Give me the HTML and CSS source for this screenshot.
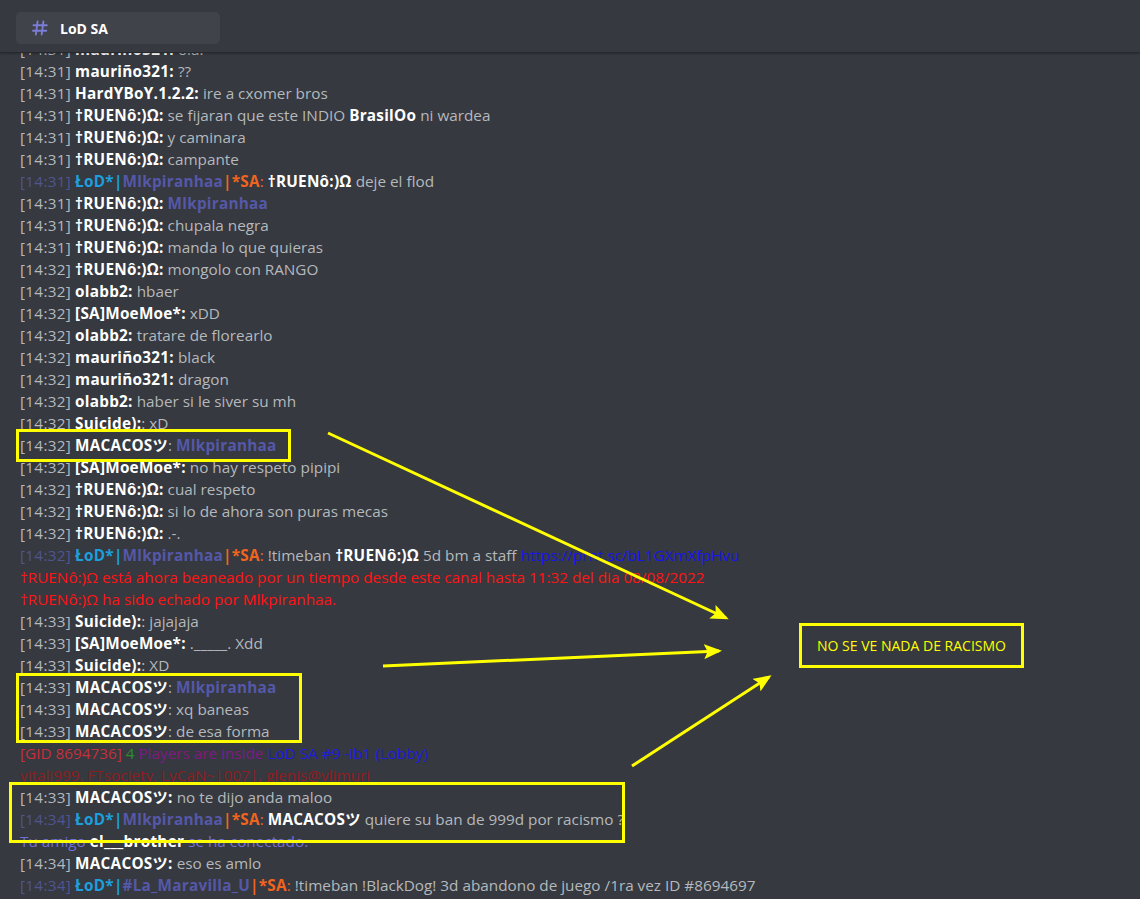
FILE: index.html
```html
<!DOCTYPE html>
<html lang="es">
<head>
<meta charset="utf-8">
<title>LoD SA</title>
<link rel="stylesheet" href="styles.css">
</head>
<body>
<div class="app">
  <header class="topbar">
    <div class="tab">
      <svg class="hash" width="16" height="16" viewBox="0 0 16 16" aria-hidden="true">
        <path d="M5.6 1.5 L3.9 14.5 M11.4 1.5 L9.7 14.5 M1.5 5.3 H14.8 M1 10.7 H14.3" stroke="#7b7dd6" stroke-width="1.9" fill="none" stroke-linecap="round"/>
      </svg>
      <span class="title">LoD SA</span>
    </div>
  </header>

  <main class="chat">
    <div class="log">
      <div class="row"><span class="ts">[14:31]</span> <b class="nick">mauriño321:</b> <span class="msg">ola.</span></div>
      <div class="row"><span class="ts">[14:31]</span> <b class="nick">mauriño321:</b> <span class="msg">??</span></div>
      <div class="row"><span class="ts">[14:31]</span> <b class="nick">HardYBoY.1.2.2:</b> <span class="msg">ire a cxomer bros</span></div>
      <div class="row"><span class="ts">[14:31]</span> <b class="nick">†RUENô:)Ω:</b> <span class="msg">se fijaran que este INDIO <b class="nick">BrasilOo</b> ni wardea</span></div>
      <div class="row"><span class="ts">[14:31]</span> <b class="nick">†RUENô:)Ω:</b> <span class="msg">y caminara</span></div>
      <div class="row"><span class="ts">[14:31]</span> <b class="nick">†RUENô:)Ω:</b> <span class="msg">campante</span></div>
      <div class="row"><span class="ts staff">[14:31]</span> <b class="clan">ŁoD*|</b><b class="mod">Mlkpiranhaa</b><b class="sa">|*SA</b><span class="sa-c">:</span> <b class="nick">†RUENô:)Ω</b> <span class="msg">deje el flod</span></div>
      <div class="row"><span class="ts">[14:31]</span> <b class="nick">†RUENô:)Ω:</b> <b class="mod">Mlkpiranhaa</b></div>
      <div class="row"><span class="ts">[14:31]</span> <b class="nick">†RUENô:)Ω:</b> <span class="msg">chupala negra</span></div>
      <div class="row"><span class="ts">[14:31]</span> <b class="nick">†RUENô:)Ω:</b> <span class="msg">manda lo que quieras</span></div>
      <div class="row"><span class="ts">[14:32]</span> <b class="nick">†RUENô:)Ω:</b> <span class="msg">mongolo con RANGO</span></div>
      <div class="row"><span class="ts">[14:32]</span> <b class="nick">olabb2:</b> <span class="msg">hbaer</span></div>
      <div class="row"><span class="ts">[14:32]</span> <b class="nick">[SA]MoeMoe*:</b> <span class="msg">xDD</span></div>
      <div class="row"><span class="ts">[14:32]</span> <b class="nick">olabb2:</b> <span class="msg">tratare de florearlo</span></div>
      <div class="row"><span class="ts">[14:32]</span> <b class="nick">mauriño321:</b> <span class="msg">black</span></div>
      <div class="row"><span class="ts">[14:32]</span> <b class="nick">mauriño321:</b> <span class="msg">dragon</span></div>
      <div class="row"><span class="ts">[14:32]</span> <b class="nick">olabb2:</b> <span class="msg">haber si le siver su mh</span></div>
      <div class="row"><span class="ts">[14:32]</span> <b class="nick">Suicide):</b><span class="msg">: xD</span></div>
      <div class="row"><span class="ts">[14:32]</span> <b class="nick">MACACOSツ</b><span class="msg">:</span> <b class="mod">Mlkpiranhaa</b></div>
      <div class="row"><span class="ts">[14:32]</span> <b class="nick">[SA]MoeMoe*:</b> <span class="msg">no hay respeto pipipi</span></div>
      <div class="row"><span class="ts">[14:32]</span> <b class="nick">†RUENô:)Ω:</b> <span class="msg">cual respeto</span></div>
      <div class="row"><span class="ts">[14:32]</span> <b class="nick">†RUENô:)Ω:</b> <span class="msg">si lo de ahora son puras mecas</span></div>
      <div class="row"><span class="ts">[14:32]</span> <b class="nick">†RUENô:)Ω:</b> <span class="msg">.-.</span></div>
      <div class="row"><span class="ts staff">[14:32]</span> <b class="clan">ŁoD*|</b><b class="mod">Mlkpiranhaa</b><b class="sa">|*SA</b><span class="sa-c">:</span> <span class="msg">!timeban</span> <b class="nick">†RUENô:)Ω</b> <span class="msg">5d bm a staff</span> <span class="link">https://prnt.sc/bL1GXmXfpHvu</span></div>
      <div class="row sys-red">†RUENô:)Ω está ahora beaneado por un tiempo desde este canal hasta 11:32 del dia 08/08/2022</div>
      <div class="row sys-red">†RUENô:)Ω ha sido echado por Mlkpiranhaa.</div>
      <div class="row"><span class="ts">[14:33]</span> <b class="nick">Suicide):</b><span class="msg">: jajajaja</span></div>
      <div class="row"><span class="ts">[14:33]</span> <b class="nick">[SA]MoeMoe*:</b> <span class="msg">._____. Xdd</span></div>
      <div class="row"><span class="ts">[14:33]</span> <b class="nick">Suicide):</b><span class="msg">: XD</span></div>
      <div class="row"><span class="ts">[14:33]</span> <b class="nick">MACACOSツ</b><span class="msg">:</span> <b class="mod">Mlkpiranhaa</b></div>
      <div class="row"><span class="ts">[14:33]</span> <b class="nick">MACACOSツ</b><span class="msg">: xq baneas</span></div>
      <div class="row"><span class="ts">[14:33]</span> <b class="nick">MACACOSツ</b><span class="msg">: de esa forma</span></div>
      <div class="row"><span class="gid">[GID 8694736]</span> <span class="g-green">4</span> <span class="g-purple">Players are inside</span> <span class="g-blue">LoD SA #9 -ib1 (Lobby)</span></div>
      <div class="row g-dark">vitali999, FTsociety, LyCaN~|007|, glenis@vlimuri</div>
      <div class="row"><span class="ts">[14:33]</span> <b class="nick">MACACOSツ:</b> <span class="msg">no te dijo anda maloo</span></div>
      <div class="row"><span class="ts staff">[14:34]</span> <b class="clan">ŁoD*|</b><b class="mod">Mlkpiranhaa</b><b class="sa">|*SA</b><span class="sa-c">:</span> <b class="nick">MACACOSツ</b> <span class="msg">quiere su ban de 999d por racismo ?</span></div>
      <div class="row friend">Tu amigo <b class="nick">el___brother</b> se ha conectado.</div>
      <div class="row"><span class="ts">[14:34]</span> <b class="nick">MACACOSツ:</b> <span class="msg">eso es amlo</span></div>
      <div class="row"><span class="ts staff">[14:34]</span> <b class="clan">ŁoD*|</b><b class="mod">#La_Maravilla_U</b><b class="sa">|*SA</b><span class="sa-c">:</span> <span class="msg">!timeban !BlackDog! 3d abandono de juego /1ra vez ID #8694697</span></div>
    </div>
  </main>

  <div class="mark mark-1"></div>
  <div class="mark mark-2"></div>
  <div class="mark mark-3"></div>
  <div class="note">NO SE VE NADA DE RACISMO</div>

  <svg class="arrows" width="1140" height="899" viewBox="0 0 1140 899" aria-hidden="true">
    <defs>
      <marker id="head" markerWidth="6" markerHeight="5" refX="5" refY="2.5" orient="auto" markerUnits="strokeWidth">
        <path d="M0 0 L6 2.5 L0 5 L1.2 2.5 Z" fill="#ffff00"/>
      </marker>
    </defs>
    <line x1="328" y1="433" x2="726" y2="618" stroke="#ffff00" stroke-width="3" marker-end="url(#head)"/>
    <line x1="383" y1="666" x2="719" y2="651" stroke="#ffff00" stroke-width="3" marker-end="url(#head)"/>
    <line x1="632" y1="766" x2="769" y2="677" stroke="#ffff00" stroke-width="3" marker-end="url(#head)"/>
  </svg>
</div>
</body>
</html>
```

FILE: styles.css
```css
* { box-sizing: border-box; }

html, body {
  margin: 0;
  padding: 0;
  background: #36393f;
  overflow: hidden;
}

.app {
  position: relative;
  width: 1140px;
  height: 899px;
  overflow: hidden;
  font-family: "Open Sans", "Noto Sans", "Noto Sans CJK JP", sans-serif;
  display: flex;
  flex-direction: column;
}

.topbar {
  flex: 0 0 53px;
  height: 53px;
  background: #36393f;
  border-bottom: 1px solid #27292d;
  box-shadow: 0 1px 2px rgba(0, 0, 0, 0.25);
  padding: 12px 0 0 16px;
  position: relative;
  z-index: 2;
}

.tab {
  width: 204px;
  height: 32px;
  background: #40434a;
  border-radius: 5px;
  display: flex;
  align-items: center;
  padding-left: 16px;
  gap: 12px;
}

.hash { flex: 0 0 auto; }

.title {
  color: #ffffff;
  font-weight: 700;
  font-size: 14px;
}

.chat {
  flex: 1 1 auto;
  overflow: hidden;
  position: relative;
}

.log {
  margin-top: -15px;
  padding-left: 20px;
}

.row {
  height: 22px;
  line-height: 22px;
  font-size: 15.3px;
  white-space: nowrap;
  color: #b5b8bc;
}

.row b { letter-spacing: 0.25px; }

.ts { color: #b5b8bc; letter-spacing: 0.3px; }
.ts.staff { color: #50548f; }

.nick { color: #ffffff; font-weight: 700; }
.msg { color: #b5b8bc; }

.clan { color: #1d9fdc; font-weight: 700; }
.mod { color: #5558a8; font-weight: 700; }
.sa { color: #f2641e; font-weight: 700; }
.sa-c { color: #f2641e; }

.link { color: #1515ee; }

.sys-red { color: #ff1414; }

.gid { color: #c4303c; }
.g-green { color: #2b8f2b; }
.g-purple { color: #7e1a86; }
.g-blue { color: #1d1ddf; }
.g-dark { color: #8e1e1e; }

.friend { color: #6f6fd8; }
.friend .nick { color: #ffffff; }

.mark {
  position: absolute;
  border: 3px solid #ffff00;
  z-index: 3;
}
.mark-1 { left: 16px; top: 429px; width: 275px; height: 33px; }
.mark-2 { left: 16px; top: 673px; width: 286px; height: 70px; }
.mark-3 { left: 9px; top: 782px; width: 616px; height: 61px; }

.note {
  position: absolute;
  left: 799px;
  top: 623px;
  width: 225px;
  height: 45px;
  border: 3px solid #ffff00;
  color: #ffff00;
  font-size: 14px;
  display: flex;
  align-items: center;
  justify-content: center;
  z-index: 3;
}

.arrows {
  position: absolute;
  left: 0;
  top: 0;
  z-index: 3;
  pointer-events: none;
}
```
